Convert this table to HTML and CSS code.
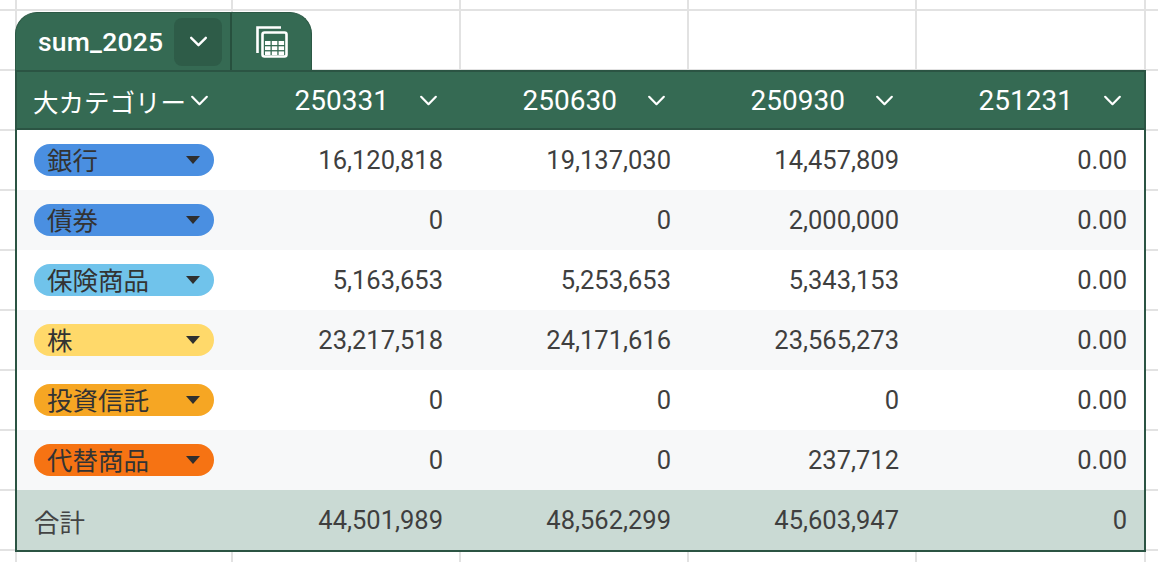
FILE: index.html
```html
<!DOCTYPE html>
<html lang="ja">
<head>
<meta charset="utf-8">
<title>sum_2025</title>
<link rel="stylesheet" href="styles.css">
</head>
<body>
<div class="sheet">
  <div class="pivot">
    <div class="tab">
      <span class="tab-name">sum_2025</span>
      <span class="tab-btn"><svg width="19" height="11" viewBox="0 0 20 12"><polyline points="2,2 10,10 18,2" fill="none" stroke="#fff" stroke-width="2.6" stroke-linecap="round" stroke-linejoin="round"/></svg></span>
      <span class="tab-sep"></span>
      <span class="tab-icon">
        <svg width="34" height="34" viewBox="0 0 34 34">
          <path d="M2.5 28 V2.5 H26" fill="none" stroke="#fff" stroke-width="2.6"/>
          <rect x="7.5" y="7.5" width="24" height="24" rx="2" fill="none" stroke="#fff" stroke-width="2.6"/>
          <rect x="10" y="16" width="5.5" height="4" fill="#fff"/>
          <rect x="16.8" y="16" width="5.5" height="4" fill="#fff"/>
          <rect x="23.6" y="16" width="5.5" height="4" fill="#fff"/>
          <rect x="10" y="21.3" width="5.5" height="3.8" fill="#fff"/>
          <rect x="16.8" y="21.3" width="5.5" height="3.8" fill="#fff"/>
          <rect x="23.6" y="21.3" width="5.5" height="3.8" fill="#fff"/>
          <rect x="10" y="26.4" width="5.5" height="3.6" fill="#fff"/>
          <rect x="16.8" y="26.4" width="5.5" height="3.6" fill="#fff"/>
          <rect x="23.6" y="26.4" width="5.5" height="3.6" fill="#fff"/>
        </svg>
      </span>
    </div>
    <div class="table">
      <div class="row head">
        <div class="cell cat"><span class="hlabel">大カテゴリー</span><svg class="chev" width="19" height="11" viewBox="0 0 20 12"><polyline points="2,2 10,10 18,2" fill="none" stroke="#fff" stroke-width="2.4" stroke-linecap="round" stroke-linejoin="round"/></svg></div>
        <div class="cell hnum"><span>250331</span><svg class="chev" width="19" height="11" viewBox="0 0 20 12"><polyline points="2,2 10,10 18,2" fill="none" stroke="#fff" stroke-width="2.4" stroke-linecap="round" stroke-linejoin="round"/></svg></div>
        <div class="cell hnum"><span>250630</span><svg class="chev" width="19" height="11" viewBox="0 0 20 12"><polyline points="2,2 10,10 18,2" fill="none" stroke="#fff" stroke-width="2.4" stroke-linecap="round" stroke-linejoin="round"/></svg></div>
        <div class="cell hnum"><span>250930</span><svg class="chev" width="19" height="11" viewBox="0 0 20 12"><polyline points="2,2 10,10 18,2" fill="none" stroke="#fff" stroke-width="2.4" stroke-linecap="round" stroke-linejoin="round"/></svg></div>
        <div class="cell hnum"><span>251231</span><svg class="chev" width="19" height="11" viewBox="0 0 20 12"><polyline points="2,2 10,10 18,2" fill="none" stroke="#fff" stroke-width="2.4" stroke-linecap="round" stroke-linejoin="round"/></svg></div>
      </div>

      <div class="row">
        <div class="cell cat"><span class="chip blue">銀行<i class="tri"></i></span></div>
        <div class="cell num">16,120,818</div>
        <div class="cell num">19,137,030</div>
        <div class="cell num">14,457,809</div>
        <div class="cell num">0.00</div>
      </div>
      <div class="row alt">
        <div class="cell cat"><span class="chip blue">債券<i class="tri"></i></span></div>
        <div class="cell num">0</div>
        <div class="cell num">0</div>
        <div class="cell num">2,000,000</div>
        <div class="cell num">0.00</div>
      </div>
      <div class="row">
        <div class="cell cat"><span class="chip sky">保険商品<i class="tri"></i></span></div>
        <div class="cell num">5,163,653</div>
        <div class="cell num">5,253,653</div>
        <div class="cell num">5,343,153</div>
        <div class="cell num">0.00</div>
      </div>
      <div class="row alt">
        <div class="cell cat"><span class="chip yellow">株<i class="tri"></i></span></div>
        <div class="cell num">23,217,518</div>
        <div class="cell num">24,171,616</div>
        <div class="cell num">23,565,273</div>
        <div class="cell num">0.00</div>
      </div>
      <div class="row">
        <div class="cell cat"><span class="chip amber">投資信託<i class="tri"></i></span></div>
        <div class="cell num">0</div>
        <div class="cell num">0</div>
        <div class="cell num">0</div>
        <div class="cell num">0.00</div>
      </div>
      <div class="row alt">
        <div class="cell cat"><span class="chip orange">代替商品<i class="tri"></i></span></div>
        <div class="cell num">0</div>
        <div class="cell num">0</div>
        <div class="cell num">237,712</div>
        <div class="cell num">0.00</div>
      </div>
      <div class="row total">
        <div class="cell cat"><span class="tlabel">合計</span></div>
        <div class="cell num">44,501,989</div>
        <div class="cell num">48,562,299</div>
        <div class="cell num">45,603,947</div>
        <div class="cell num">0</div>
      </div>
    </div>
  </div>
</div>
</body>
</html>
```

FILE: styles.css
```css
* { box-sizing: border-box; }

html, body {
  margin: 0;
  padding: 0;
  background: #ffffff;
}

body {
  font-family: Roboto, "Noto Sans CJK JP", "Noto Sans", sans-serif;
}

.sheet {
  width: 1158px;
  height: 562px;
  overflow: hidden;
  padding: 12px 0 0 15px;
  background-color: #ffffff;
  background-image:
    linear-gradient(to right,
      transparent 0 15px, #e2e2e2 15px 17px,
      transparent 17px 231px, #e2e2e2 231px 233px,
      transparent 233px 459px, #e2e2e2 459px 461px,
      transparent 461px 687px, #e2e2e2 687px 689px,
      transparent 689px 915px, #e2e2e2 915px 917px,
      transparent 917px 1144px, #e2e2e2 1144px 1146px,
      transparent 1146px),
    repeating-linear-gradient(to bottom,
      transparent 0 9px, #e2e2e2 9px 11px, transparent 11px 60px);
}

.pivot {
  width: 1131px;
  display: flex;
  flex-direction: column;
  align-items: flex-start;
}

/* ---------- tab ---------- */
.tab {
  height: 58px;
  width: 297px;
  background: #356a53;
  border-radius: 22px 22px 0 0;
  border: 1px solid #2c5845;
  border-bottom: none;
  display: flex;
  align-items: center;
  padding-left: 22px;
  color: #fff;
}

.tab-name {
  font-family: Roboto, "Noto Sans", sans-serif;
  font-size: 26.5px;
  font-weight: 500;
  letter-spacing: 0.2px;
  color: #ffffff;
}

.tab-btn {
  margin-left: 11px;
  width: 48px;
  height: 48px;
  border-radius: 8px;
  background: #2e5c48;
  display: flex;
  align-items: center;
  justify-content: center;
}

.tab-sep {
  margin-left: 8px;
  width: 2px;
  align-self: stretch;
  background: #27503e;
}

.tab-icon {
  margin-left: 23px;
  display: flex;
  align-items: center;
  padding-top: 1px;
}

/* ---------- table ---------- */
.table {
  width: 1131px;
  border: 2px solid #2b5443;
  display: flex;
  flex-direction: column;
  background: #fff;
}

.row {
  display: grid;
  grid-template-columns: 215px repeat(4, 228px);
  height: 60px;
}

.row.alt { background: #f7f8f9; }

.row.total { background: #cadad4; }

.row.head {
  height: 58px;
  background: #356a53;
  border-bottom: 2px solid #2b5443;
  color: #fff;
}

.cell {
  display: flex;
  align-items: center;
  min-width: 0;
}

.head .cat {
  padding-left: 16px;
  gap: 4px;
}

.hlabel {
  font-family: "Noto Sans CJK JP", sans-serif;
  font-size: 25.5px;
  color: #fff;
  letter-spacing: 0;
}

.hnum {
  justify-content: flex-end;
  padding-right: 22px;
  gap: 30px;
  font-size: 28px;
  color: #fff;
}

.chev { flex: none; }

.cat { padding-left: 17px; }

.num {
  justify-content: flex-end;
  padding-right: 17px;
  font-family: Roboto, sans-serif;
  font-size: 25.5px;
  color: #3f3f3f;
}

.chip {
  width: 180px;
  height: 32px;
  border-radius: 16px;
  display: flex;
  align-items: center;
  justify-content: space-between;
  padding: 0 14px 2px 13px;
  font-family: "Noto Sans CJK JP", sans-serif;
  font-size: 25.5px;
  line-height: 30px;
  color: #333333;
}

.tri {
  width: 0;
  height: 0;
  margin-top: 2px;
  border-left: 7px solid transparent;
  border-right: 7px solid transparent;
  border-top: 8px solid #2f2f2f;
}

.chip.blue { background: #4a8fe1; }
.chip.sky { background: #70c3eb; }
.chip.yellow { background: #ffd96a; }
.chip.amber { background: #f6a623; }
.chip.orange { background: #f67313; }

.tlabel {
  font-family: "Noto Sans CJK JP", sans-serif;
  font-size: 25.5px;
  color: #444;
}
```
